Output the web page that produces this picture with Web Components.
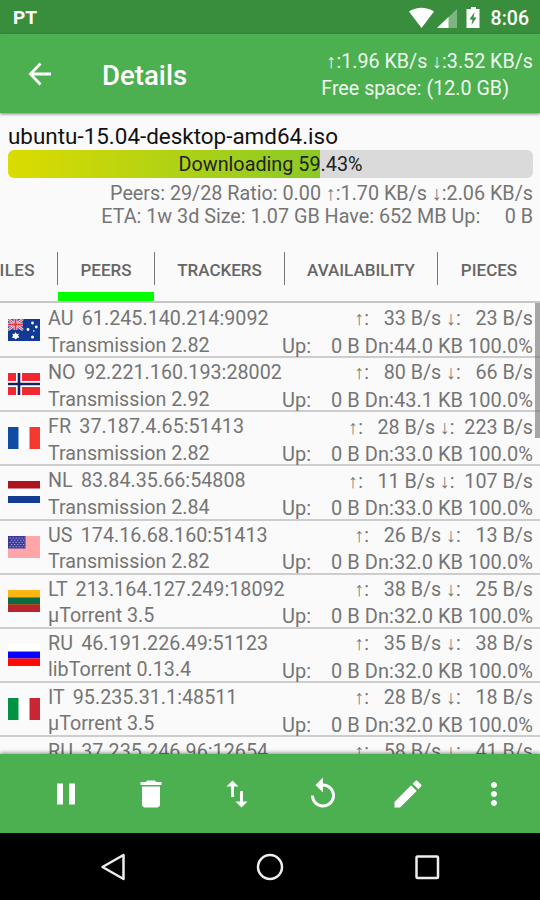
<!DOCTYPE html>
<html lang="en">
<head>
<meta charset="utf-8">
<title>Details</title>
<style>
    body {
        margin: 0;
        font-family: Roboto, "Liberation Sans", sans-serif;
    }
</style>
</head>
<body>
<torrent-screen></torrent-screen>

<script>
const FLAGS = {
    AU: `<rect width="32" height="22" fill="#123a94"/>
        <rect width="15" height="11" fill="#3c4fa0"/>
        <path d="M0 0L15 11M15 0L0 11" stroke="#f3dfe4" stroke-width="2.6"/>
        <path d="M0 0L15 11M15 0L0 11" stroke="#e0384a" stroke-width="1"/>
        <path d="M7.5 0V11M0 5.5H15" stroke="#f7e6e8" stroke-width="3.6"/>
        <path d="M7.5 0V11M0 5.5H15" stroke="#e0384a" stroke-width="2"/>
        <path d="M7.5 13l1.2 2 2.2-.3-.8 2.1 1.3 1.8-2.3.3-1.4 1.7-1.5-1.7-2.3-.2 1.2-1.9-.8-2.1 2.3.3z" fill="#fff"/>
        <g fill="#fff"><circle cx="24.5" cy="4" r="1.4"/><circle cx="20" cy="10.5" r="1.4"/><circle cx="28.3" cy="8" r="1.4"/><circle cx="24.5" cy="18" r="1.5"/><circle cx="25.8" cy="12" r=".8"/></g>`,
    NO: `<rect width="32" height="22" fill="#f02832"/>
        <path d="M11 0V22M0 11H32" stroke="#fff" stroke-width="6"/>
        <path d="M11 0V22M0 11H32" stroke="#15205c" stroke-width="2.6"/>`,
    FR: `<rect width="32" height="22" fill="#fff"/><rect width="10.5" height="22" fill="#0f4da2"/><rect x="21.5" width="10.5" height="22" fill="#f5392f"/>`,
    NL: `<rect width="32" height="22" fill="#fff"/><rect width="32" height="7.5" fill="#ae1320"/><rect y="15" width="32" height="7" fill="#123d91"/>`,
    US: `<rect width="32" height="22" fill="#ffa6a8"/><rect width="17.5" height="12.5" fill="#39379c"/>
        <path d="M1.5 2H17M3 4.2H17M1.5 6.4H17M3 8.6H17M1.5 10.8H17" stroke="#b9b5df" stroke-width="1" stroke-dasharray="1.3 1.7"/>`,
    LT: `<rect width="32" height="22" fill="#fdb511"/><rect y="7.5" width="32" height="7" fill="#096a43"/><rect y="14.5" width="32" height="7.5" fill="#ba242c"/>`,
    RU: `<rect width="32" height="22" fill="#fff"/><rect y="7.5" width="32" height="7" fill="#0a00ff"/><rect y="14.5" width="32" height="7.5" fill="#ff0a00"/>`,
    IT: `<rect width="32" height="22" fill="#fff"/><rect width="10.5" height="22" fill="#019246"/><rect x="21.5" width="10.5" height="22" fill="#c82634"/>`
};

const PEERS = [
    ["AU", "61.245.140.214:9092", "Transmission 2.82", "   33", "   23", "44.0"],
    ["NO", "92.221.160.193:28002", "Transmission 2.92", "   80", "   66", "43.1"],
    ["FR", "37.187.4.65:51413", "Transmission 2.82", "   28", "  223", "33.0"],
    ["NL", "83.84.35.66:54808", "Transmission 2.84", "   11", "  107", "33.0"],
    ["US", "174.16.68.160:51413", "Transmission 2.82", "   26", "   13", "32.0"],
    ["LT", "213.164.127.249:18092", "µTorrent 3.5", "   38", "   25", "32.0"],
    ["RU", "46.191.226.49:51123", "libTorrent 0.13.4", "   35", "   38", "32.0"],
    ["IT", "95.235.31.1:48511", "µTorrent 3.5", "   28", "   18", "32.0"],
    ["RU", "37.235.246.96:12654", "µTorrent 3.5", "   58", "   41", "32.0"]
];

class StatusBar extends HTMLElement {
    constructor() {
        super();
        this.attachShadow({ mode: "open" }).innerHTML = `
            <style>
                :host {
                    display: flex;
                    align-items: center;
                    height: 34px;
                    box-sizing: border-box;
                    padding: 2px 11px 0 13px;
                    background: #388e3c;
                    color: #fff;
                    font-size: 19.5px;
                    font-weight: 500;
                }
                .app { flex: 1; font-weight: 700; font-size: 19px; margin-top: -2px; }
                svg { display: block; margin: -1px 9px 0 0; }
            </style>
            <span class="app">PT</span>
            <svg width="73" height="22" viewBox="0 0 73 22" fill="#fff">
                <path d="M0 4.5Q12.5-3 25 4.5L12.5 21z"/>
                <path d="M48 2V21H28z" opacity=".35"/>
                <path d="M39.5 10V21H28z"/>
                <path fill-rule="evenodd" d="M62 0h5v2h3.5v19h-13V2H62zM65.5 5L60.5 12.5h3L62.5 18 67.5 10.5h-3z"/>
            </svg>
            <span class="time">8:06</span>
        `;
    }
}

class AppBar extends HTMLElement {
    constructor() {
        super();
        this.attachShadow({ mode: "open" }).innerHTML = `
            <style>
                :host {
                    display: flex;
                    align-items: center;
                    height: 79px;
                    box-sizing: border-box;
                    padding: 0 7px 0 28px;
                    background: #4caf50;
                    color: #fff;
                    position: relative;
                    z-index: 1;
                    box-shadow: 0 1px 3px rgba(60, 30, 60, 0.6);
                }
                h1 {
                    flex: 1;
                    margin: 4px 0 0 50px;
                    font-size: 27.6px;
                    font-weight: 500;
                }
                .totals {
                    padding-top: 3px;
                    font-size: 19.7px;
                    line-height: 27px;
                    white-space: nowrap;
                    text-align: right;
                    color: #f0faf0;
                }
                .free { padding-right: 24px; }
            </style>
            <svg width="24" height="24" viewBox="0 0 24 24" fill="none" stroke="#fff" stroke-width="2.8">
                <path d="M23 12H3M12.5 1.5L2.5 12L12.5 22.5"/>
            </svg>
            <h1><slot></slot></h1>
            <div class="totals">
                <div class="speed">↑:1.96 KB/s ↓:3.52 KB/s</div>
                <div class="free">Free space: (12.0 GB)</div>
            </div>
        `;
    }
}

class TorrentSummary extends HTMLElement {
    constructor() {
        super();
        this.attachShadow({ mode: "open" }).innerHTML = `
            <style>
                :host {
                    display: block;
                    height: 127px;
                    box-sizing: border-box;
                    padding: 9px 7px 0 8px;
                    color: #757575;
                }
                .name { color: #111; font-size: 22.45px; line-height: 29px; height: 28px; }
                .bar {
                    height: 28px;
                    line-height: 30px;
                    border-radius: 6px;
                    text-align: center;
                    color: #222;
                    font-size: 19.8px;
                    background: linear-gradient(90deg, #dbdc00, #8ac926) 0 0 / 59.43% 100% no-repeat #dadada;
                }
                .line {
                    font-size: 19.75px;
                    line-height: 23px;
                    text-align: right;
                    white-space: pre;
                }
                .first { padding-top: 4px; }
            </style>
            <div class="name"><slot></slot></div>
            <div class="bar">Downloading 59.43%</div>
            <div class="line first">Peers: 29/28 Ratio: 0.00 ↑:1.70 KB/s ↓:2.06 KB/s</div>
            <div class="line">ETA: 1w 3d Size: 1.07 GB Have: 652 MB Up:     0 B</div>
        `;
    }
}

class TabStrip extends HTMLElement {
    constructor() {
        super();
        this.attachShadow({ mode: "open" }).innerHTML = `
            <style>
                :host {
                    display: grid;
                    grid-template-columns: 58px 97px 130px 153px 102px;
                    height: 63px;
                    box-sizing: border-box;
                    border-bottom: 2px solid #c6c6c6;
                    overflow: hidden;
                    color: #666;
                    font-size: 17px;
                    font-weight: 500;
                }
                .tab {
                    display: flex;
                    justify-content: center;
                    align-items: center;
                    margin: 12px 0 16px;
                    padding-top: 2px;
                    border-right: 1px solid #777;
                    white-space: nowrap;
                    position: relative;
                }
                .first { justify-content: flex-end; padding-right: 22px; letter-spacing: 0.4px; }
                .last { border-right: 0; }
                .active::after {
                    content: "";
                    position: absolute;
                    left: 0;
                    right: 0;
                    bottom: -17px;
                    height: 10px;
                    background: #0f0;
                }
            </style>
            <div class="tab first">FILES</div>
            <div class="tab active">PEERS</div>
            <div class="tab">TRACKERS</div>
            <div class="tab">AVAILABILITY</div>
            <div class="tab last">PIECES</div>
        `;
    }
}

class PeerRow extends HTMLElement {
    constructor() {
        super();
        this.attachShadow({ mode: "open" });
    }

    set peer(peer) {
        const [country, address, client, up, down, total] = peer;
        this.shadowRoot.innerHTML = `
            <style>
                :host {
                    display: grid;
                    grid-template-columns: 40px minmax(0, 1fr) auto;
                    align-items: center;
                    height: 54.15px;
                    box-sizing: border-box;
                    padding: 2px 7px 0 8px;
                    border-bottom: 2px solid #cdcdcd;
                    color: #757575;
                    font-size: 19.7px;
                    line-height: 26.5px;
                    white-space: pre;
                    flex: none;
                }
                svg { display: block; margin-top: -5px; }
                .right { text-align: right; }
                .address { word-spacing: -0.8px; letter-spacing: 0.03px; }
                .totals { font-size: 20px; letter-spacing: 0.02px; line-height: 26px; }
            </style>
            <svg width="32" height="22" viewBox="0 0 32 22">${FLAGS[country]}</svg>
            <div><div class="address">${country}  ${address}</div><div class="client">${client}</div></div>
            <div class="right"><div>↑:${up} B/s ↓:${down} B/s</div><div class="totals">Up:    0 B Dn:${total} KB 100.0%</div></div>
        `.replace(/>\n\s+</g, "><");
    }
}

class PeerList extends HTMLElement {
    constructor() {
        super();
        this.attachShadow({ mode: "open" }).innerHTML = `
            <style>
                :host {
                    display: flex;
                    flex-direction: column;
                    height: 451px;
                    box-sizing: border-box;
                    padding-top: 1px;
                    overflow: hidden;
                    position: relative;
                }
                .thumb {
                    position: absolute;
                    top: 0;
                    right: 0;
                    width: 5px;
                    height: 135px;
                    background: rgba(110, 110, 110, 0.6);
                }
            </style>
            <div class="thumb"></div>
        `;
        PEERS.forEach((peer) => {
            const row = document.createElement("peer-row");
            row.peer = peer;
            this.shadowRoot.appendChild(row);
        });
    }
}

class ActionBar extends HTMLElement {
    constructor() {
        super();
        this.attachShadow({ mode: "open" }).innerHTML = `
            <style>
                :host {
                    display: grid;
                    grid-template-columns: repeat(6, 1fr);
                    place-items: center;
                    height: 79px;
                    box-sizing: border-box;
                    padding: 0 3px 0 23px;
                    background: #4caf50;
                    position: relative;
                    box-shadow: 0 -1px 4px rgba(0, 0, 0, 0.45);
                }
                svg { display: block; width: 36px; height: 36px; fill: #fff; }
            </style>
            <svg viewBox="0 0 24 24"><path d="M6 19h4V5H6v14zm8-14v14h4V5h-4z"/></svg>
            <svg viewBox="0 0 24 24"><path d="M6 19c0 1.1.9 2 2 2h8c1.1 0 2-.9 2-2V7H6v12zM19 4h-3.5l-1-1h-5l-1 1H5v2h14V4z"/></svg>
            <svg viewBox="0 0 24 24"><path d="M16 17.01V10h-2v7.01h-3L15 21l4-3.99h-3zM9 3L5 6.99h3V14h2V6.99h3L9 3z"/></svg>
            <svg viewBox="0 0 24 24"><path d="M12 5V1L7 6l5 5V7c3.31 0 6 2.69 6 6s-2.69 6-6 6-6-2.69-6-6H4c0 4.42 3.58 8 8 8s8-3.58 8-8-3.58-8-8-8z"/></svg>
            <svg viewBox="0 0 24 24"><path d="M3 17.25V21h3.75L17.81 9.94l-3.75-3.75L3 17.25zM20.71 7.04c.39-.39.39-1.02 0-1.41l-2.34-2.34c-.39-.39-1.02-.39-1.41 0l-1.83 1.83 3.75 3.75 1.83-1.83z"/></svg>
            <svg viewBox="0 0 24 24"><path d="M12 8c1.1 0 2-.9 2-2s-.9-2-2-2-2 .9-2 2 .9 2 2 2zm0 2c-1.1 0-2 .9-2 2s.9 2 2 2 2-.9 2-2-.9-2-2-2zm0 6c-1.1 0-2 .9-2 2s.9 2 2 2 2-.9 2-2-.9-2-2-2z"/></svg>
        `;
    }
}

class NavBar extends HTMLElement {
    constructor() {
        super();
        this.attachShadow({ mode: "open" }).innerHTML = `
            <style>
                :host {
                    display: grid;
                    grid-template-columns: repeat(3, 157px);
                    justify-content: center;
                    place-items: center;
                    height: 67px;
                    background: #000;
                }
                svg { display: block; fill: none; stroke: #eee; stroke-width: 2.5; }
            </style>
            <svg width="30" height="30" viewBox="0 0 30 30"><path d="M25.5 3V27L4.5 15z" stroke-linejoin="round"/></svg>
            <svg width="30" height="30" viewBox="0 0 30 30"><circle cx="15" cy="15" r="12"/></svg>
            <svg width="30" height="30" viewBox="0 0 30 30"><rect x="4.5" y="4.5" width="21.5" height="21.5" rx="1"/></svg>
        `;
    }
}

class TorrentScreen extends HTMLElement {
    constructor() {
        super();
        this.attachShadow({ mode: "open" }).innerHTML = `
            <style>
                :host {
                    display: flex;
                    flex-direction: column;
                    width: 540px;
                    height: 900px;
                    overflow: hidden;
                    background: #fafafa;
                }
            </style>
            <status-bar></status-bar>
            <app-bar>Details</app-bar>
            <torrent-summary>ubuntu-15.04-desktop-amd64.iso</torrent-summary>
            <tab-strip></tab-strip>
            <peer-list></peer-list>
            <action-bar></action-bar>
            <nav-bar></nav-bar>
        `;
    }
}

customElements.define("status-bar", StatusBar);
customElements.define("app-bar", AppBar);
customElements.define("torrent-summary", TorrentSummary);
customElements.define("tab-strip", TabStrip);
customElements.define("peer-row", PeerRow);
customElements.define("peer-list", PeerList);
customElements.define("action-bar", ActionBar);
customElements.define("nav-bar", NavBar);
customElements.define("torrent-screen", TorrentScreen);
</script>
</body>
</html>
